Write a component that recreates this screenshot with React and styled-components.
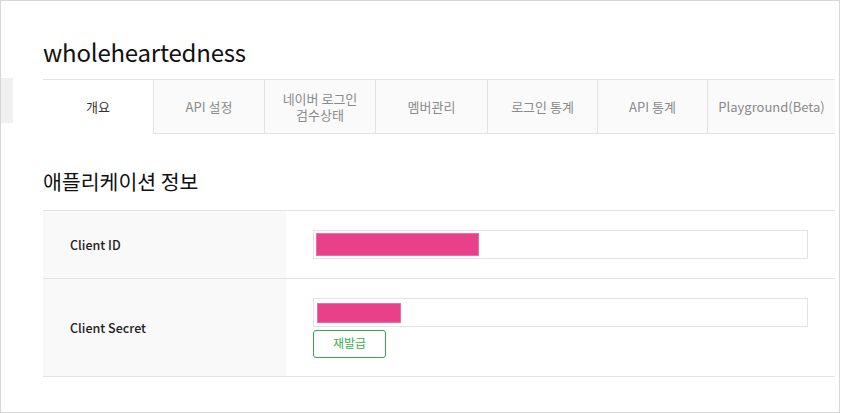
import React from 'react';
import styled, { createGlobalStyle } from 'styled-components';

const GlobalStyle = createGlobalStyle`
  html, body {
    margin: 0;
    padding: 0;
    background: #ffffff;
  }
  body {
    font-family: 'Noto Sans CJK KR', 'Noto Sans', sans-serif;
    color: #333333;
  }
`;

// Marco exterior de la captura
const Frame = styled.div`
  display: flex;
  width: 840px;
  height: 413px;
  box-sizing: border-box;
  border: 1px solid #d6d6d6;
  overflow: hidden;
`;

const SideStub = styled.div`
  width: 12px;
  flex-shrink: 0;

  div {
    margin-top: 77px;
    height: 45px;
    background: #f0f0f0;
  }
`;

const Main = styled.main`
  flex: 1;
  padding: 0 4px 0 30px;
  display: flex;
  flex-direction: column;
`;

const AppTitle = styled.h1`
  margin: 36px 0 0;
  height: 42px;
  font-size: 24px;
  font-weight: 400;
  line-height: 30px;
  color: #111111;
  letter-spacing: -0.2px;
`;

// Pestañas de navegación
const Tabs = styled.nav`
  display: flex;
  height: 55px;
  border-top: 1px solid #e3e3e3;
  box-sizing: border-box;
`;

const Tab = styled.div`
  width: ${(p) => p.$w}px;
  flex-shrink: 0;
  ${(p) => p.$grow && 'flex: 1;'}
  display: flex;
  align-items: center;
  justify-content: center;
  text-align: center;
  font-size: 13px;
  line-height: 16px;
  box-sizing: border-box;
  background: ${(p) => (p.$active ? '#ffffff' : '#fafafa')};
  color: ${(p) => (p.$active ? '#333333' : '#8a8a8a')};
  border-bottom: 1px solid ${(p) => (p.$active ? 'transparent' : '#e3e3e3')};
  border-left: ${(p) => (p.$first ? 'none' : '1px solid #e3e3e3')};
`;

const SectionTitle = styled.h2`
  margin: 33px 0 0;
  height: 43px;
  font-size: 20.5px;
  font-weight: 400;
  line-height: 28px;
  color: #111111;
`;

const Table = styled.div`
  border-top: 1px solid #e3e3e3;
`;

const Row = styled.div`
  display: flex;
  height: ${(p) => p.$h}px;
  box-sizing: border-box;
  border-bottom: 1px solid #e3e3e3;
`;

const Label = styled.div`
  width: 243px;
  flex-shrink: 0;
  background: #f9f9f9;
  display: flex;
  align-items: center;
  padding-left: 27px;
  box-sizing: border-box;
  font-size: 12.5px;
  font-weight: 500;
  color: #222222;
`;

const Value = styled.div`
  flex: 1;
  padding: ${(p) => p.$pt}px 27px 0 27px;
  display: flex;
  flex-direction: column;
  align-items: flex-start;
`;

const Field = styled.div`
  width: 100%;
  height: 29px;
  box-sizing: border-box;
  border: 1px solid #e3e3e3;
  background: #ffffff;
  padding: 2px;
`;

const Redacted = styled.div`
  width: ${(p) => p.$w}px;
  height: ${(p) => p.$h}px;
  margin: ${(p) => p.$mt}px 0 0 ${(p) => p.$ml}px;
  background: #e8418a;
  border: 1px solid #f06aa5;
  box-sizing: border-box;
`;

const ReissueButton = styled.button`
  margin-top: 3px;
  width: 73px;
  height: 28px;
  box-sizing: border-box;
  border: 1px solid #3aa54c;
  border-radius: 3px;
  background: #ffffff;
  color: #3aae4e;
  font-family: 'Noto Sans CJK KR', sans-serif;
  font-size: 12px;
  padding: 0 0 3px;
  cursor: pointer;
`;

const tabs = [
  { label: '개요', w: 110, active: true },
  { label: 'API 설정', w: 111 },
  { label: ['네이버 로그인', '검수상태'], w: 111 },
  { label: '멤버관리', w: 112 },
  { label: '로그인 통계', w: 110 },
  { label: 'API 통계', w: 110 },
  { label: 'Playground(Beta)', w: 128, grow: true },
];

const App = () => {
  return (
    <>
      <GlobalStyle />
      <Frame>
        <SideStub>
          <div />
        </SideStub>
        <Main>
          <AppTitle>wholeheartedness</AppTitle>
          <Tabs>
            {tabs.map((t, i) => (
              <Tab key={i} $w={t.w} $active={t.active} $first={i === 0} $grow={t.grow}>
                {Array.isArray(t.label) ? (
                  <span>
                    {t.label[0]}
                    <br />
                    {t.label[1]}
                  </span>
                ) : (
                  t.label
                )}
              </Tab>
            ))}
          </Tabs>

          <SectionTitle>애플리케이션 정보</SectionTitle>

          <Table>
            <Row $h={68}>
              <Label>Client ID</Label>
              <Value $pt={19}>
                <Field>
                  <Redacted $w={163} $h={23} $mt={0} $ml={0} />
                </Field>
              </Value>
            </Row>
            <Row $h={98}>
              <Label>Client Secret</Label>
              <Value $pt={19}>
                <Field>
                  <Redacted $w={84} $h={20} $mt={2} $ml={1} />
                </Field>
                <ReissueButton>재발급</ReissueButton>
              </Value>
            </Row>
          </Table>
        </Main>
      </Frame>
    </>
  );
};

export default App;
